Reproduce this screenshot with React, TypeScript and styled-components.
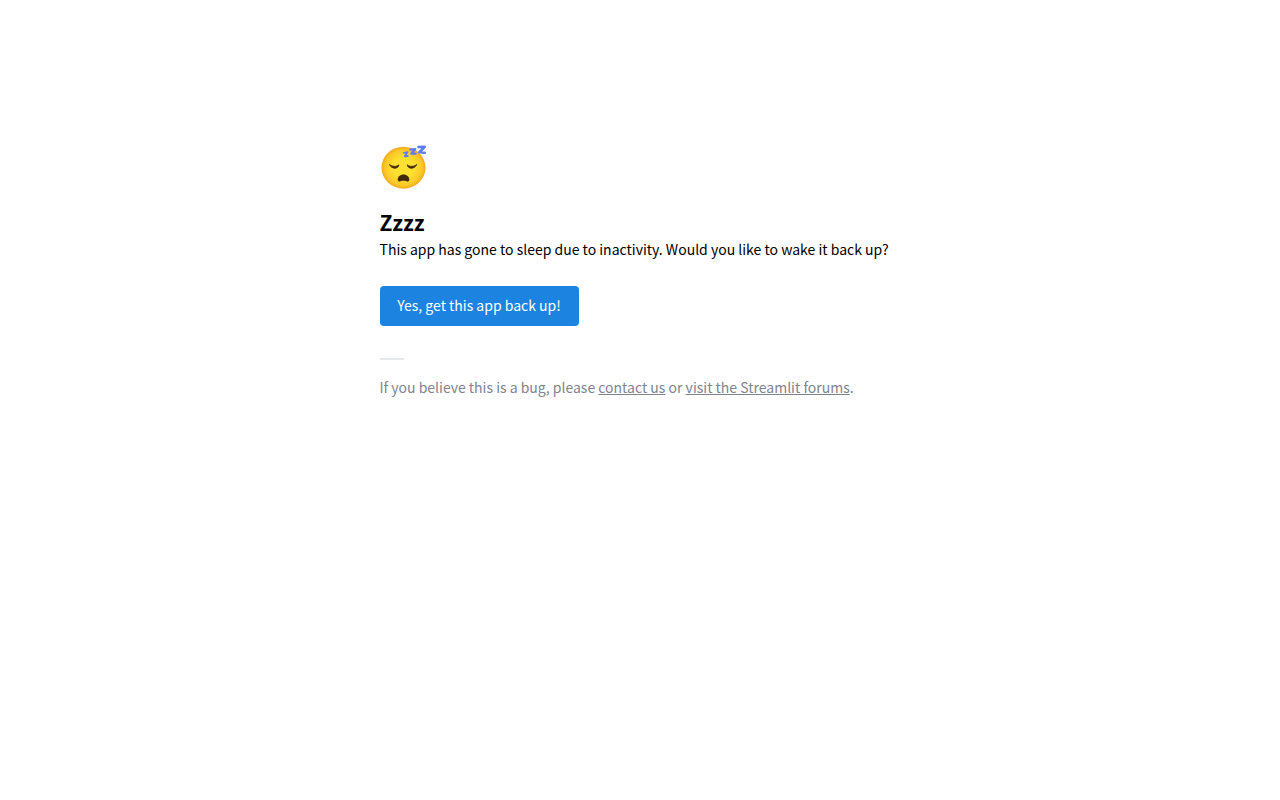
import React from "react";
import styled, { createGlobalStyle } from "styled-components";

const GlobalStyle = createGlobalStyle`
  body {
    margin: 0;
    background: #ffffff;
    color: #000000;
    font-family: "Source Sans Pro", "Noto Sans CJK SC", sans-serif;
    font-size: 14px;
    line-height: 24px;
  }
`;

const Page = styled.div`
  display: flex;
  justify-content: center;
  padding: 144px 16px 32px;
`;

const Content = styled.main`
  width: 100%;
  max-width: 521px;
`;

const Emoji = styled.svg`
  display: block;
  width: 48px;
  height: 48px;
  margin-bottom: 15px;
`;

const Title = styled.h1`
  margin: 0;
  font-size: 21px;
  font-weight: 700;
  line-height: 30px;
`;

const Message = styled.p`
  margin: 0;
`;

const WakeButton = styled.button`
  min-width: 199px;
  height: 40px;
  margin: 25px 0 32px;
  padding: 0 15px 2px;
  border: 0;
  border-radius: 4px;
  background: #1c83e1;
  color: #ffffff;
  font: inherit;
  cursor: pointer;
`;

const Divider = styled.hr`
  width: 24px;
  height: 2px;
  margin: 0 0 15px;
  border: 0;
  background: #e6e9ec;
`;

const Help = styled.p`
  margin: 0;
  color: #808490;
`;

const HelpLink = styled.a`
  color: inherit;
  text-decoration: underline;
  text-underline-offset: 1px;
`;

function SleepingFace() {
  return (
    <Emoji viewBox="0 0 48 48" role="img" aria-label="Sleeping face">
      <defs>
        <radialGradient id="skin" cx="50%" cy="50%" r="52%">
          <stop offset="0.45" stopColor="#fde030" />
          <stop offset="0.8" stopColor="#fbc928" />
          <stop offset="1" stopColor="#f2a01f" />
        </radialGradient>
      </defs>
      <ellipse cx="23.5" cy="23.7" rx="22" ry="21" fill="url(#skin)" />
      <g fill="#422b0d" stroke="#422b0d" strokeWidth="1" strokeLinejoin="round">
        <path d="M9.6 20.5C11.8 22.9 16.8 23 18.9 20.9C18.2 25.4 11.3 25.2 9.6 20.5z" />
        <path d="M36.6 20.5C34.4 22.9 29.4 23 27.3 20.9C28 25.4 34.9 25.2 36.6 20.5z" />
      </g>
      <path
        d="M23.5 30.6c-3.5 0-5.8 2.5-5.8 5 0 1.7 1.1 2.2 2.7 1.7 2-.6 4.2-.6 6.2 0 1.6.5 2.7 0 2.7-1.7 0-2.5-2.3-5-5.8-5z"
        fill="#422b0d"
      />
      <g fill="none" stroke="#5c7cf5" strokeLinejoin="round" strokeLinecap="round">
        <path d="M24 8.8l3.6-.7-2.8 4.2 3-.3" strokeWidth="1.8" />
        <path d="M30.3 5.6l5-.6-4 4.6 4.4 0" strokeWidth="2.2" />
        <path d="M38.5 3l6.2-.1-5.4 5.3 5.4.6" strokeWidth="2.6" />
      </g>
    </Emoji>
  );
}

export default function App() {
  return (
    <>
      <GlobalStyle />
      <Page>
        <Content>
          <SleepingFace />
          <Title>Zzzz</Title>
          <Message>
            This app has gone to sleep due to inactivity. Would you like to wake it back up?
          </Message>
          <WakeButton type="button">Yes, get this app back up!</WakeButton>
          <Divider />
          <Help>
            If you believe this is a bug, please <HelpLink href="#contact">contact us</HelpLink> or{" "}
            <HelpLink href="#forums">visit the Streamlit forums</HelpLink>.
          </Help>
        </Content>
      </Page>
    </>
  );
}
